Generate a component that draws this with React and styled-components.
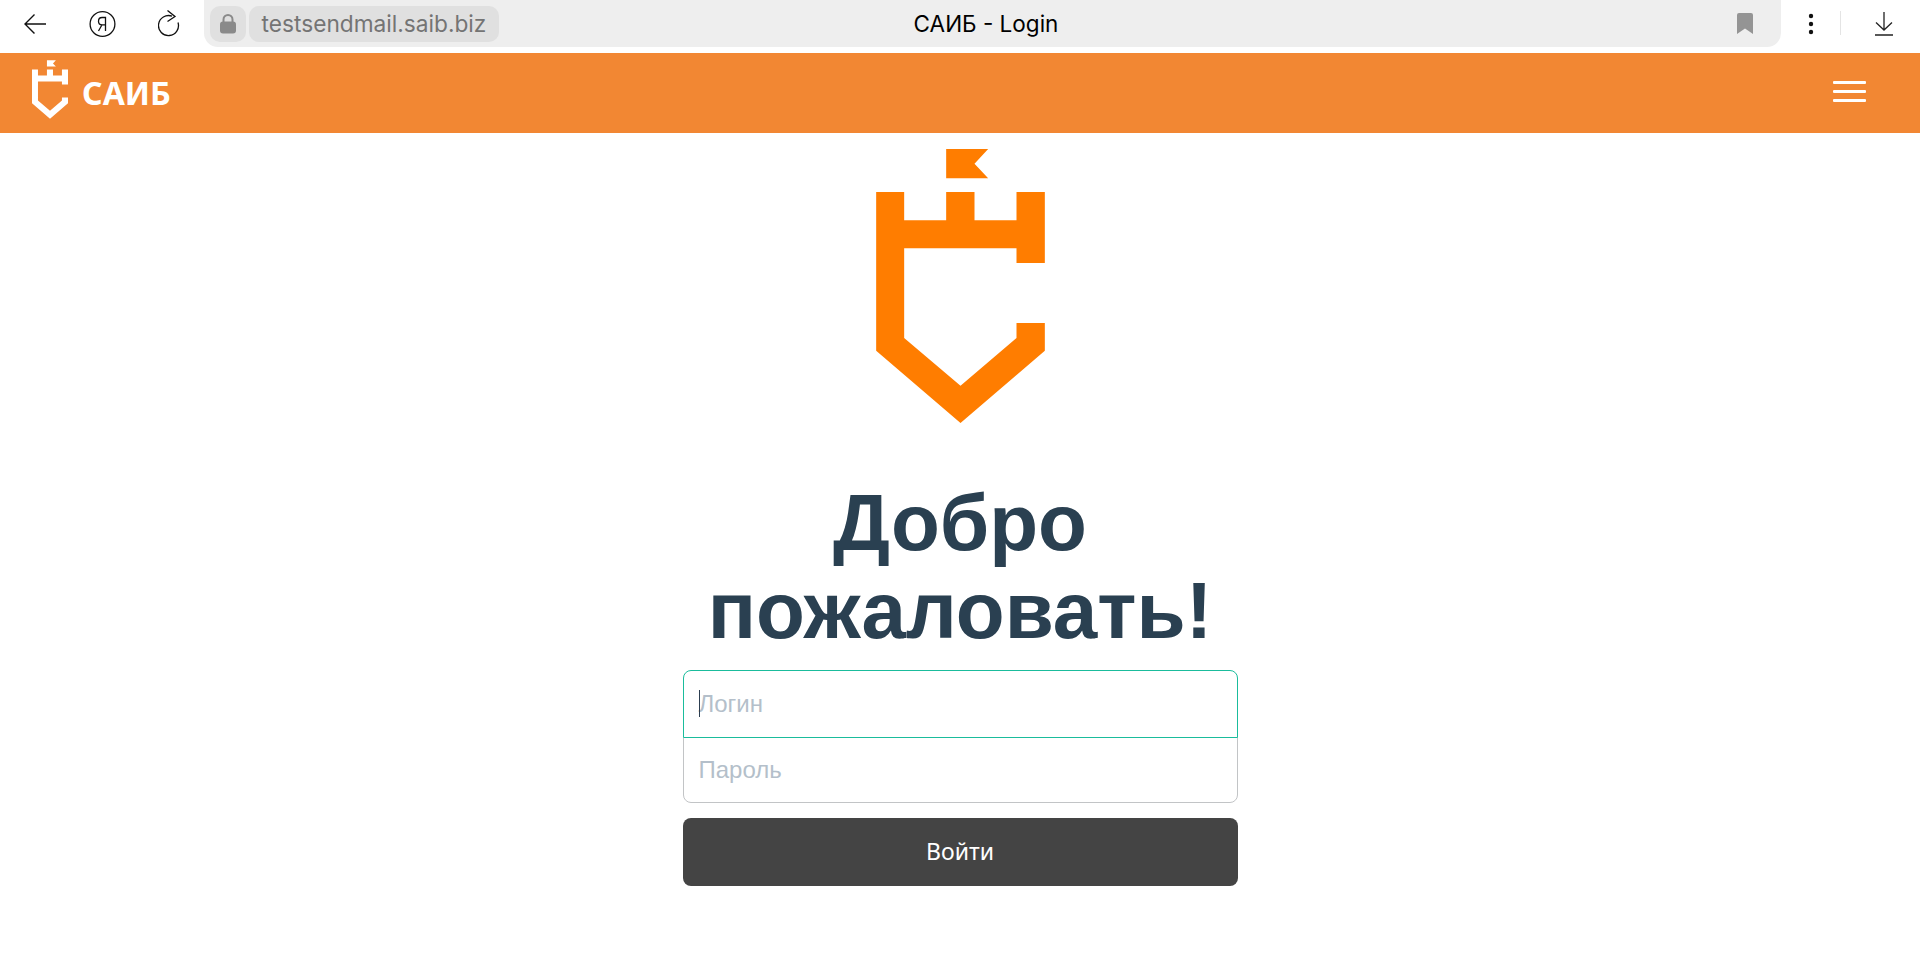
import React from "react";
import styled, { createGlobalStyle } from "styled-components";

const Global = createGlobalStyle`
  html, body { margin: 0; padding: 0; background: #fff; }
  body { font-family: "Liberation Sans", Arial, sans-serif; }
  * { box-sizing: border-box; }
`;

const Page = styled.div`
  width: 1920px;
  height: 954px;
  overflow: hidden;
  display: flex;
  flex-direction: column;
`;

const Toolbar = styled.div`
  height: 53px;
  flex: none;
  display: flex;
  align-items: flex-start;
  background: #fff;
`;

const ToolSlot = styled.div`
  width: ${(p) => p.$w}px;
  height: 47px;
  flex: none;
  display: flex;
  align-items: center;
  justify-content: center;
`;

const AddressBar = styled.div`
  width: 1577px;
  height: 47px;
  flex: none;
  padding: 5px 19px 6px 6px;
  background: #eeeeee;
  border-radius: 0 0 14px 14px;
  display: grid;
  grid-template-columns: 1fr auto 1fr;
  align-items: center;
`;

const Chips = styled.div`
  display: flex;
  gap: 3px;
`;

const LockChip = styled.div`
  width: 36px;
  height: 36px;
  border-radius: 10px;
  background: #e0e0e0;
  display: flex;
  align-items: center;
  justify-content: center;
`;

const UrlChip = styled.div`
  width: 250px;
  height: 36px;
  border-radius: 10px;
  background: #e0e0e0;
  color: #747474;
  font: 400 22.7px/36px "Inter", sans-serif;
  text-align: center;
  white-space: nowrap;
`;

const Title = styled.div`
  font: 400 22.5px/37px "Inter", sans-serif;
  color: #000;
  white-space: nowrap;
`;

const BarEnd = styled.div`
  display: flex;
  justify-content: flex-end;
  padding-right: 9px;
`;

const Divider = styled.div`
  width: 1px;
  height: 24px;
  background: #e4e4e4;
  flex: none;
  margin: 11px 0 0;
`;

const Nav = styled.header`
  height: 80px;
  flex: none;
  background: #f28733;
  display: flex;
  align-items: center;
  justify-content: space-between;
  padding: 0 54px 0 32px;
`;

const Brand = styled.div`
  display: flex;
  align-items: center;
  gap: 14px;
`;

const BrandMark = styled.svg`
  display: block;
  width: 36px;
  height: 59px;
  margin-bottom: 7px;
`;

const BrandName = styled.span`
  font: 700 32px/1 "Noto Sans", "Open Sans", sans-serif;
  color: #fff;
  padding-bottom: 1px;
`;

const Burger = styled.div`
  width: 33px;
  display: flex;
  flex-direction: column;
  gap: 6px;
  margin-bottom: 3px;
`;

const BurgerLine = styled.span`
  display: block;
  height: 3px;
  background: #fff;
  border-radius: 1px;
`;

const Main = styled.main`
  display: flex;
  flex-direction: column;
  align-items: center;
  padding-top: 16.3px;
`;

const Hero = styled.svg`
  display: block;
  width: 169px;
  height: 274px;
`;

const Form = styled.form`
  width: 555px;
  display: flex;
  flex-direction: column;
  margin-top: 55.7px;
`;

const Heading = styled.h1`
  margin: 0 0 15px;
  font: 700 80px/88px "Liberation Sans", Arial, sans-serif;
  color: #2a4051;
  text-align: center;
`;

const Field = styled.div`
  height: ${(p) => (p.$focus ? 68 : 66)}px;
  margin-top: ${(p) => (p.$focus ? 0 : -1)}px;
  padding-left: 15px;
  display: flex;
  align-items: center;
  position: relative;
  background: ${(p) => (p.$focus ? "#fff" : "transparent")};
  z-index: ${(p) => (p.$focus ? 1 : 0)};
  border: 1px solid ${(p) => (p.$focus ? "#1abc9c" : "#c2c4c6")};
  border-radius: ${(p) => (p.$focus ? "8px 8px 0 0" : "0 0 8px 8px")};
  font: 400 24px/1 "Liberation Sans", Arial, sans-serif;
  color: #b4bfca;
`;

const Caret = styled.span`
  position: absolute;
  left: 15px;
  top: 19px;
  width: 1px;
  height: 27px;
  background: #2c3e50;
`;

const Submit = styled.button`
  height: 68px;
  margin-top: 15px;
  border: 0;
  border-radius: 8px;
  background: #444444;
  color: #fff;
  font: 400 23px/1 "Noto Sans", "Open Sans", sans-serif;
`;

const ShieldPaths = ({ fill }) => (
  <>
    <path
      fill={fill}
      d="M107 187H191V272H317V187H402V272H528V187H613V400H528V356H191V625L360 768L528 625V580H613V663L360 880L107 663Z"
    />
    <path fill={fill} d="M317 58H443L402 102L443 146H317Z" />
  </>
);

export default function App() {
  return (
    <Page>
      <Global />
      <Toolbar>
        <ToolSlot $w={70}>
          <svg width="24" height="22" viewBox="0 0 24 22" fill="none" stroke="#111" strokeWidth="1.4">
            <path d="M23 11H2M11.5 1.5L2 11l9.5 9.5" />
          </svg>
        </ToolSlot>
        <ToolSlot $w={65}>
          <svg width="28" height="28" viewBox="0 0 28 28" fill="none" stroke="#111" strokeWidth="1.3">
            <circle cx="13.5" cy="14" r="12.4" />
            <path d="M16.5 21V7.5h-3.4c-2.2 0-3.6 1.5-3.6 3.7s1.4 3.6 3.6 3.6h3.4M13 14.8L9.5 21" />
          </svg>
        </ToolSlot>
        <ToolSlot $w={69}>
          <svg width="24" height="28" viewBox="0 -1 24 28" fill="none" stroke="#111" strokeWidth="1.3">
            <path d="M14 5.2A10 10 0 1 0 20 11.5" />
            <path d="M9.5 -0.5L17 5.5l-7.5 5" />
          </svg>
        </ToolSlot>
        <AddressBar>
          <Chips>
            <LockChip>
              <svg width="16" height="20" viewBox="0 0 16 20">
                <path d="M3.5 8V5.5a4.5 4.5 0 0 1 9 0V8" fill="none" stroke="#8a8a8a" strokeWidth="2" />
                <rect x="0" y="7.5" width="16" height="12" rx="3" fill="#8a8a8a" />
              </svg>
            </LockChip>
            <UrlChip>testsendmail.saib.biz</UrlChip>
          </Chips>
          <Title>САИБ - Login</Title>
          <BarEnd>
            <svg width="16" height="21" viewBox="0 0 16 21">
              <path d="M2 0H14a2 2 0 0 1 2 2V21L8 15.5 0 21V2a2 2 0 0 1 2-2Z" fill="#949494" />
            </svg>
          </BarEnd>
        </AddressBar>
        <ToolSlot $w={59}>
          <svg width="6" height="22" viewBox="0 0 6 22" fill="#111">
            <circle cx="3" cy="3" r="2.2" />
            <circle cx="3" cy="11" r="2.2" />
            <circle cx="3" cy="19" r="2.2" />
          </svg>
        </ToolSlot>
        <Divider />
        <ToolSlot $w={85}>
          <svg width="20" height="24" viewBox="0 0 20 24" fill="none" stroke="#222" strokeWidth="1.3">
            <path d="M10 0V18M2 10.5L10 18l8-7.5M1 23H19" />
          </svg>
        </ToolSlot>
      </Toolbar>
      <Nav>
        <Brand>
          <BrandMark viewBox="107 58 506 822">
            <ShieldPaths fill="#fff" />
          </BrandMark>
          <BrandName>САИБ</BrandName>
        </Brand>
        <Burger>
          <BurgerLine />
          <BurgerLine />
          <BurgerLine />
        </Burger>
      </Nav>
      <Main>
        <Hero viewBox="107 58 506 822">
          <ShieldPaths fill="#ff7d00" />
        </Hero>
        <Form onSubmit={(e) => e.preventDefault()}>
          <Heading>Добро пожаловать!</Heading>
          <Field $focus>
            <Caret />
            Логин
          </Field>
          <Field>Пароль</Field>
          <Submit type="button">Войти</Submit>
        </Form>
      </Main>
    </Page>
  );
}
